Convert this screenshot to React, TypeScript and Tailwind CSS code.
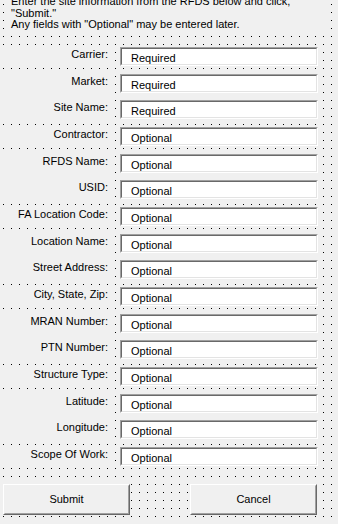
const FIELDS: { label: string; value: string }[] = [
  { label: 'Carrier:', value: 'Required' },
  { label: 'Market:', value: 'Required' },
  { label: 'Site Name:', value: 'Required' },
  { label: 'Contractor:', value: 'Optional' },
  { label: 'RFDS Name:', value: 'Optional' },
  { label: 'USID:', value: 'Optional' },
  { label: 'FA Location Code:', value: 'Optional' },
  { label: 'Location Name:', value: 'Optional' },
  { label: 'Street Address:', value: 'Optional' },
  { label: 'City, State, Zip:', value: 'Optional' },
  { label: 'MRAN Number:', value: 'Optional' },
  { label: 'PTN Number:', value: 'Optional' },
  { label: 'Structure Type:', value: 'Optional' },
  { label: 'Latitude:', value: 'Optional' },
  { label: 'Longitude:', value: 'Optional' },
  { label: 'Scope Of Work:', value: 'Optional' },
];

const FormButton = ({ label }: { label: string }) => (
  <div className="w-[127px] h-[31px] border border-t-white border-l-white border-r-[#696969] border-b-[#696969]">
    <div className="w-full h-full flex items-center justify-center bg-[#f0f0f0] border border-t-[#f0f0f0] border-l-[#f0f0f0] border-r-[#a0a0a0] border-b-[#a0a0a0]">
      {label}
    </div>
  </div>
);

export default function App() {
  return (
    <div
      className="w-[338px] h-[524px] overflow-hidden flex flex-col bg-[#f0f0f0] bg-[radial-gradient(circle_at_3.5px_4.5px,#000_0.55px,transparent_0.8px)] bg-[length:8px_8px] text-black text-[11px]"
      style={{ fontFamily: '"Liberation Sans", Arial, sans-serif' }}
    >
      {/* instructions */}
      <div className="-mt-[4px] ml-[8px] mr-[8px] h-[38px] bg-[#f0f0f0] pl-[3px] leading-[11.5px] shrink-0">
        <div>Enter the site information from the RFDS below and click,</div>
        <div>"Submit."</div>
        <div>Any fields with "Optional" may be entered later.</div>
      </div>

      {/* fields */}
      <div className="mt-[13px] flex flex-col gap-y-[7.667px] shrink-0">
        {FIELDS.map(f => (
          <div key={f.label} className="flex items-start h-[19px]">
            <div className="w-[112px] h-[19px] bg-[#f0f0f0] text-right pr-[4px] leading-[14px]">
              {f.label}
            </div>
            <div className="ml-[8px] w-[198px] h-[19px] border border-t-[#a0a0a0] border-l-[#a0a0a0] border-r-white border-b-white">
              <div className="w-full h-full bg-white border border-t-[#696969] border-l-[#696969] border-r-[#e3e3e3] border-b-[#e3e3e3] pl-[9px] pt-[2px] leading-[14px]">
                {f.value}
              </div>
            </div>
          </div>
        ))}
      </div>

      {/* buttons */}
      <div className="mt-[17.67px] flex justify-between pl-[3px] pr-[21px] shrink-0">
        <FormButton label="Submit" />
        <FormButton label="Cancel" />
      </div>
    </div>
  );
}
